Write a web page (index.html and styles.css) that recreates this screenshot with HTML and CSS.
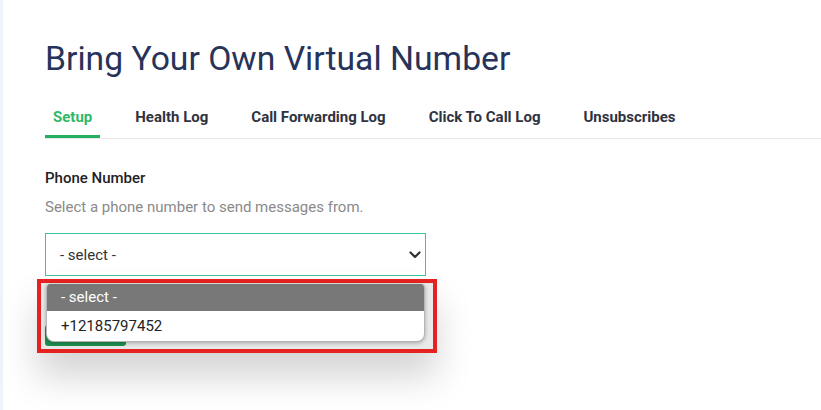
FILE: index.html
```html
<!DOCTYPE html>
<html lang="en">
<head>
<meta charset="utf-8">
<title>Bring Your Own Virtual Number</title>
<link rel="stylesheet" href="styles.css">
</head>
<body>
<div class="layout">
  <div class="rail"></div>
  <main class="main">
    <h1 class="title">Bring Your Own Virtual Number</h1>
    <nav class="tabs">
      <a class="tab active">Setup</a>
      <a class="tab">Health Log</a>
      <a class="tab">Call Forwarding Log</a>
      <a class="tab">Click To Call Log</a>
      <a class="tab">Unsubscribes</a>
    </nav>
    <section class="field">
      <div class="label">Phone Number</div>
      <div class="help">Select a phone number to send messages from.</div>
      <div class="select-wrap">
        <div class="select">
          <span>- select -</span>
          <svg class="chev" width="12" height="8" viewBox="0 0 12 8"><path d="M1.5 1.5 L6 6 L10.5 1.5" fill="none" stroke="#333" stroke-width="2.2" stroke-linecap="round" stroke-linejoin="round"/></svg>
        </div>
        <div class="annot">
          <div class="btn-peek"></div>
          <ul class="list">
            <li class="opt selected">- select -</li>
            <li class="opt">+12185797452</li>
          </ul>
        </div>
      </div>
    </section>
  </main>
</div>
</body>
</html>
```

FILE: styles.css
```css
* { box-sizing: border-box; }
html, body { margin: 0; padding: 0; background: #fff; }
body { font-family: Roboto, "Noto Sans", sans-serif; overflow: hidden; }
.layout { display: flex; min-height: 410px; }
.rail { width: 3px; background: #eef2f9; flex: none; }
.main { flex: 1; padding: 39px 0 0 42px; }
.title {
  margin: 0;
  font-size: 33.7px;
  line-height: 40px;
  font-weight: 400;
  color: #28335a;
}
.tabs {
  display: flex;
  margin-top: 21px;
  border-bottom: 1px solid #e7e7e7;
}
.tab {
  padding: 8px 8px 9px;
  margin-right: 27px;
  font-size: 15px;
  line-height: 18px;
  font-weight: 700;
  color: #2f3340;
  border-bottom: 3px solid transparent;
}
.tab.active { color: #2fb86a; border-bottom-color: #27ae60; }
.field { margin-top: 29px; }
.label {
  font-size: 15px;
  line-height: 20px;
  font-weight: 500;
  color: #1f2125;
}
.help {
  margin-top: 9px;
  font-size: 15px;
  line-height: 20px;
  color: #8a8a8a;
}
.select-wrap { position: relative; width: 381px; margin-top: 16px; }
.select {
  height: 43px;
  border: 1px solid #3cc4a2;
  display: flex;
  align-items: center;
  justify-content: space-between;
  padding: 0 4px 0 14px;
  font-size: 15px;
  color: #333;
}
.chev { margin-right: 0; }
.annot {
  position: absolute;
  top: 46px;
  left: -8px;
  width: 400px;
  border: 4px solid #e52222;
  background: #e9e9e9;
  padding: 1px 8px 7px 5px;
  box-shadow: 0 24px 36px rgba(0,0,0,0.17);
}
.btn-peek {
  position: absolute;
  left: 4px;
  top: 42px;
  width: 81px;
  height: 21px;
  background: #1f9150;
  border-radius: 3px;
}
.list {
  position: relative;
  list-style: none;
  margin: 0;
  padding: 0;
  background: #fff;
  border: 1px solid #b5b5b5;
  border-top: none;
  border-radius: 4px 4px 8px 8px;
  overflow: hidden;
  box-shadow: 0 1px 4px rgba(0,0,0,0.3);
}
.opt {
  padding: 0 14px;
  font-size: 15px;
  color: #222;
  height: 30px;
  line-height: 31px;
}
.opt.selected {
  height: 27px;
  line-height: 26px;
  background: #787878;
  color: #fff;
}
```
